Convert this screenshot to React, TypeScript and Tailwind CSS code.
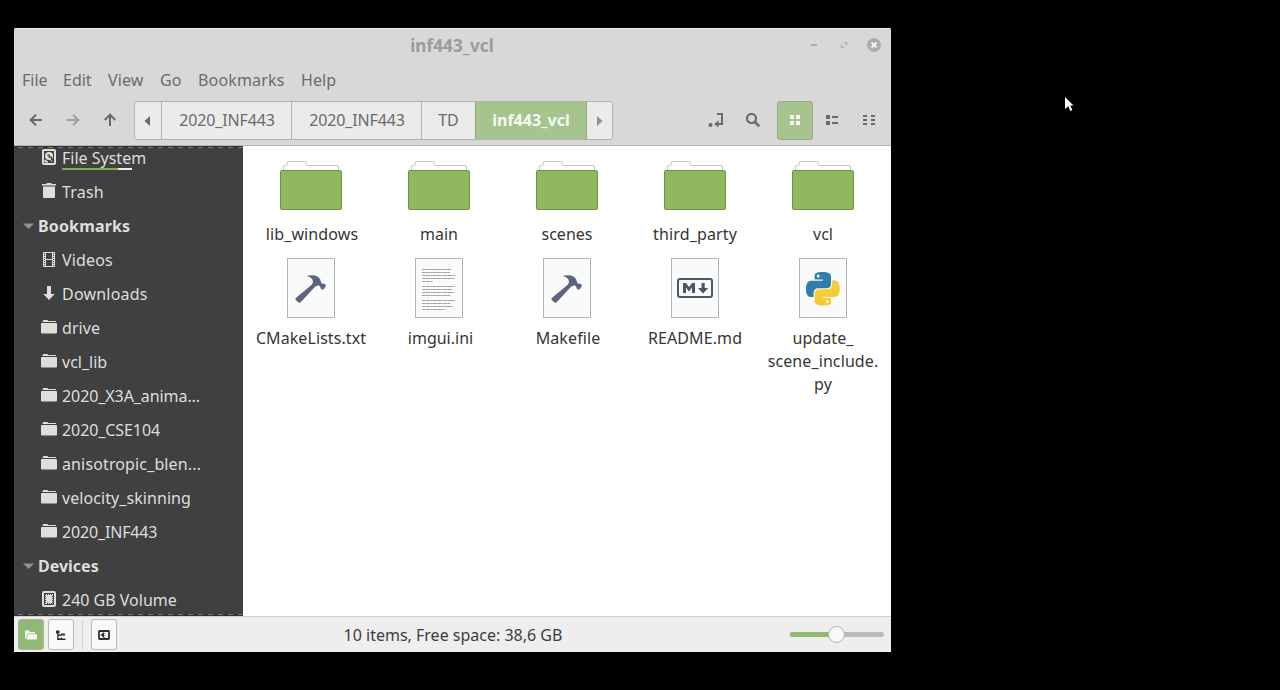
import type { ReactNode } from "react";

const dark = "#6a6a6a";

function DiskIcon() {
  return (
    <svg width="16" height="16" viewBox="0 0 16 16">
      <rect x="2" y="1" width="12" height="14" rx="1" fill="none" stroke="#dedede" strokeWidth="2" />
      <circle cx="8" cy="7" r="4" fill="#dedede" />
      <path d="M6.200 6.200h2v2h2l1 4" fill="none" stroke="#404040" strokeWidth="1.300" />
      <path d="M4 11l3 2H4zM8.500 10l2.600 2.600" stroke="#dedede" strokeWidth="1" fill="#dedede" />
    </svg>
  );
}

function TrashIcon() {
  return (
    <svg width="16" height="16" viewBox="0 0 16 16" fill="#dedede">
      <path d="M1 1h4.500V0h5v1H15v1.500H1zM2 3.500h12v10.700q0 .8-.8.800H2.800q-.8 0-.8-.8z" />
    </svg>
  );
}

function FilmIcon() {
  return (
    <svg width="16" height="16" viewBox="0 0 16 16">
      <path fill="#dedede" fillRule="evenodd" d="M2 1h12v15H2zM5 2v6h6V2zM5 9v6h6V9z" />
      <path d="M3.500 2v13M12.500 2v13" stroke="#404040" strokeWidth="1" strokeDasharray="1 1" />
    </svg>
  );
}

function DownIcon() {
  return (
    <svg width="16" height="16" viewBox="0 0 16 16" fill="#dedede">
      <path d="M6 1h4v8h3.800L8 15 2.200 9H6z" />
    </svg>
  );
}

function SmallFolder() {
  return (
    <svg width="16" height="17" viewBox="0 -1 16 17" fill="#dedede">
      <path d="M2.500 0h3.700q.8 0 .8 1h8v1H1.500V1h.5V.500zM0 4q0-1 1-1h14q1 0 1 1v8.500q0 1-1 1H1q-1 0-1-1z" />
    </svg>
  );
}

function DriveIcon() {
  return (
    <svg width="16" height="16" viewBox="0 0 16 16">
      <rect x="2" y="1" width="12" height="14" rx="1" fill="none" stroke="#dedede" strokeWidth="2" />
      <rect x="5" y="4" width="6" height="8" fill="#dedede" />
      <path d="M5 3.500h7M5 12.500h7M4.500 4v9M11.500 4v9" stroke="#dedede" strokeDasharray="1 1" />
    </svg>
  );
}

function SideRow({ icon, label, fit = "" }: { icon: ReactNode; label: string; fit?: string }) {
  return (
    <div className="flex h-[34px] shrink-0 items-center pl-[27px]">
      <span className="mt-[-2px] mr-[5px] shrink-0">{icon}</span>
      <span className={`whitespace-nowrap ${fit}`}>{label}</span>
    </div>
  );
}

function SideHead({ label, fit = "" }: { label: string; fit?: string }) {
  return (
    <div className="flex h-[34px] shrink-0 items-center pl-[9px] font-bold">
      <svg className="mr-[4px]" width="11" height="6" viewBox="0 0 11 6">
        <path d="M0 .5h11L5.500 6z" fill="#929292" />
      </svg>
      <span className={fit}>{label}</span>
    </div>
  );
}

function BigFolder() {
  return (
    <svg className="relative top-px shrink-0" width="64" height="64" viewBox="0 0 64 64">
      <path d="M4.500 18v-8q0-1.500 1.500-1.500h1.500q.8 0 .8-.8V6q0-1.500 1.500-1.500h16.200q1.500 0 1.500 1.500v1.200q0 1.300 1.300 1.300h29.200q1.500 0 1.500 1.500v8" fill="#fff" stroke="#c4c4c4" />
      <rect x="1.500" y="13.500" width="61" height="39" rx="1.500" fill="#8fb85f" stroke="#6c9748" />
    </svg>
  );
}

function Sheet({ children }: { children: ReactNode }) {
  return (
    <svg className="mt-[-4px] mb-[4px] shrink-0" width="64" height="64" viewBox="0 0 64 64">
      <rect x="8.500" y="2.500" width="47" height="59" fill="#f9fafa" stroke="#b5b5b5" />
      {children}
    </svg>
  );
}

function Hammer() {
  return (
    <Sheet>
      <path
        fill="#5a657c"
        transform="translate(-.7 -.7)"
        d="M28.300 20.700C31.500 19.600 36.500 19.800 39.500 21.500Q42.500 23.300 43 27.500L43.700 28.800Q45 27.600 47 29L47.500 31 44.800 34.500Q42 34 41.800 31.500L40.500 30 37 31.200 21.800 47.500Q20.500 48 18.500 45.800 16.700 44 17.200 43L33.700 29.200Q35.500 26.500 34 24Q32.500 21.600 28.300 20.700z"
      />
    </Sheet>
  );
}

const textLines = [
  [13.5, 29], [16.5, 28], [19.5, 33.5], [22.5, 32.5], [25.5, 11],
  [30.5, 33], [33.5, 30], [36.5, 32.5], [39.5, 28],
  [44.5, 33.5], [47.5, 28], [50.5, 31], [53.5, 23],
];

function TextDoc() {
  return (
    <Sheet>
      {textLines.map(([y, w]) => (
        <path key={y} d={`M15 ${y}h${w}`} stroke="#a3a3a3" strokeWidth="1" strokeDasharray="3 0.3 5 0.4 2 0.3" />
      ))}
    </Sheet>
  );
}

function Markdown() {
  return (
    <Sheet>
      <rect x="15" y="23" width="34" height="18" rx="2" fill="none" stroke="#4d5665" strokeWidth="2" />
      <path d="M20 37V27h3l3 4 3-4h3v10h-3v-5.500l-3 4-3-4V37zM38.500 27h3.200v5h3.500L40.100 37.500 35 32h3.500z" fill="#4d5665" />
    </Sheet>
  );
}

function Python() {
  return (
    <Sheet>
      <g transform="translate(15 16) scale(1.4)">
        <path
          fill="#2f7dab"
          d="M14.25.18l.9.2.73.26.59.3.45.32.34.34.25.34.16.33.1.3.04.26.02.2-.01.13V8.5l-.05.63-.13.55-.21.46-.26.38-.3.31-.33.25-.35.19-.35.14-.33.1-.3.07-.26.04-.21.02H8.77l-.69.05-.59.14-.5.22-.41.27-.33.32-.27.35-.2.36-.15.37-.1.35-.07.32-.04.27-.02.21v3.06H3.17l-.21-.03-.28-.07-.32-.12-.35-.18-.36-.26-.36-.36-.35-.46-.32-.59-.28-.73-.21-.88-.14-1.05-.05-1.23.06-1.22.16-1.04.24-.87.32-.71.36-.57.4-.44.42-.33.42-.24.4-.16.36-.1.32-.05.24-.01h.16l.06.01h8.16v-.83H6.18l-.01-2.75-.02-.37.05-.34.11-.31.17-.28.25-.26.31-.23.38-.2.44-.18.51-.15.58-.12.64-.1.71-.06.77-.04.84-.02 1.27.05zm-6.3 1.98l-.23.33-.08.41.08.41.23.34.33.22.41.09.41-.09.33-.22.23-.34.08-.41-.08-.41-.23-.33-.33-.22-.41-.09-.41.09z"
        />
        <path
          fill="#f5cc33"
          d="M21.04 6.11l.28.06.32.12.35.18.36.27.36.35.35.47.32.59.28.73.21.88.14 1.04.05 1.23-.06 1.23-.16 1.04-.24.86-.32.71-.36.57-.4.45-.42.33-.42.24-.4.16-.36.09-.32.05-.24.02-.16-.01h-8.22v.82h5.84l.01 2.76.02.36-.05.34-.11.31-.17.29-.25.25-.31.24-.38.2-.44.17-.51.15-.58.13-.64.09-.71.07-.77.04-.84.01-1.27-.04-1.07-.14-.9-.2-.73-.25-.59-.3-.45-.33-.34-.34-.25-.34-.16-.33-.1-.3-.04-.25-.02-.2.01-.13v-5.34l.05-.64.13-.54.21-.46.26-.38.3-.32.33-.24.35-.2.35-.14.33-.1.3-.06.26-.04.21-.02.13-.01h5.84l.69-.05.59-.14.5-.21.41-.28.33-.32.27-.35.2-.36.15-.36.1-.35.07-.32.04-.28.02-.21V6.07h2.09l.14.01zm-6.47 14.25l-.23.33-.08.41.08.41.23.33.33.23.41.08.41-.08.33-.23.23-.33.08-.41-.08-.41-.23-.33-.33-.23-.41-.08-.41.08z"
        />
      </g>
    </Sheet>
  );
}

function FileItem({ icon, lines, fit = "" }: { icon: ReactNode; lines: string[]; fit?: string }) {
  return (
    <div className="flex h-[104px] flex-col items-center">
      {icon}
      <div className={`mt-[3px] text-center leading-[23px] whitespace-nowrap ${fit}`}>
        {lines.map((l) => (
          <div key={l}>{l}</div>
        ))}
      </div>
    </div>
  );
}

function TitleBar() {
  return (
    <div className="flex h-[35px] shrink-0 items-center border-t border-[#ebebeb]">
      <div className="w-[100px]" />
      <div className="flex-1 text-center text-[17px] leading-[34px] font-bold tracking-[0.13px] text-[#9b9b9b]">inf443_vcl</div>
      <svg width="101" height="34" viewBox="0 0 101 34">
        <path d="M21 16h6" stroke="#aaa" strokeWidth="2" />
        <path d="M53.500 13H57v3.500zM51 15.500V19h3.500z" fill="#b2b2b2" stroke="#b2b2b2" strokeWidth="0.500" />
        <circle cx="84" cy="16" r="7" fill="#adadad" />
        <path d="M81.500 13.500l5 5M86.500 13.500l-5 5" stroke="#f5f5f5" strokeWidth="2" />
      </svg>
    </div>
  );
}

function NavArrow({ d, color, box }: { d: string; color: string; box: string }) {
  return (
    <div className={box}>
      <svg width="14" height="14" viewBox="0 0 14 14" fill="none" stroke={color} strokeWidth="2">
        <path d={d} />
      </svg>
    </div>
  );
}

function ToolBar() {
  return (
    <div className="flex h-[48px] shrink-0 border-b border-[#b4b4b4] pt-[3px]">
      <NavArrow box="flex h-[38px] w-[37px] items-center justify-end pr-[8px]" color={dark} d="M13 7H2M7 1.700L1.700 7 7 12.300" />
      <NavArrow box="flex h-[38px] w-[37px] items-center justify-end pr-[8px]" color="#9e9e9e" d="M1 7h11M7 1.700L12.300 7 7 12.300" />
      <NavArrow box="flex h-[38px] w-[46px] items-center pl-[15px]" color={dark} d="M7 13V2M1.700 7L7 1.700 12.300 7" />
      <div className="flex h-[39px] overflow-hidden rounded-[3px] border border-[#b2b2b2] bg-[#ebebeb] leading-[23px] text-[#6a6a6a]">
        <div className="flex w-[27px] items-center justify-center border-r border-[#b2b2b2] pr-[2px]">
          <svg width="6" height="10" viewBox="0 0 6 10"><path d="M6 0v10L.5 5z" fill={dark} /></svg>
        </div>
        <div className="flex w-[130px] items-center justify-center border-r border-[#b2b2b2] pl-px tracking-[-0.16px]">2020_INF443</div>
        <div className="flex w-[130px] items-center justify-center border-r border-[#b2b2b2] pl-px tracking-[-0.16px]">2020_INF443</div>
        <div className="flex w-[53px] items-center justify-center">TD</div>
        <div className="-my-px flex w-[112px] items-center justify-center border border-[#91a67f] bg-[#a5c48e] font-bold text-[#f7f9f5]">inf443_vcl</div>
        <div className="flex w-[25px] items-center justify-center">
          <svg width="6" height="10" viewBox="0 0 6 10"><path d="M0 0v10l5.500-5z" fill="#909090" /></svg>
        </div>
      </div>
      <div className="flex-1" />
      <svg className="mt-[11px]" width="16" height="16" viewBox="0 0 16 16">
        <circle cx="2.500" cy="13" r="2" fill={dark} />
        <path d="M9 2h5v10H9.500" fill="none" stroke={dark} strokeWidth="2" />
        <path d="M10.500 8.500v7L6 12z" fill={dark} />
      </svg>
      <svg className="mt-[12px] ml-[21px]" width="16" height="16" viewBox="0 0 16 16" fill="none" stroke={dark} strokeWidth="2.200">
        <circle cx="6.500" cy="5.500" r="4.500" />
        <path d="M9.800 8.800l4.500 4.500" strokeWidth="2.600" />
      </svg>
      <div className="ml-[16px] flex h-[39px] w-[36px] items-center justify-center rounded-[3px] border border-[#98aa89] bg-[#a5c48e]">
        <svg className="mt-[-1px]" width="10" height="10" viewBox="0 0 10 10" fill="#f7f9f4"><path d="M0 0h4v4H0zM6 0h4v4H6zM0 6h4v4H0zM6 6h4v4H6z" /></svg>
      </div>
      <svg className="mt-[14px] ml-[13px]" width="12" height="11" viewBox="0 0 12 11" fill={dark}>
        <path d="M0 0h4v4H0zM6 1h6v2H6zM0 6h4v4H0zM6 7h6v2H6z" />
      </svg>
      <svg className="mt-[14px] mr-[16px] ml-[25px]" width="12" height="11" viewBox="0 0 12 11" fill={dark}>
        <path d="M0 0h4v2H0zM0 4h4v2H0zM0 8h4v2H0zM8 0h4v2H8zM8 4h4v2H8zM8 8h4v2H8z" />
      </svg>
    </div>
  );
}

const bookmarks = [
  { label: "drive", fit: "tracking-[0.05px]" },
  { label: "vcl_lib", fit: "" },
  { label: "2020_X3A_anima...", fit: "tracking-[-0.08px]" },
  { label: "2020_CSE104", fit: "tracking-[-0.08px]" },
  { label: "anisotropic_blen...", fit: "tracking-[0.13px]" },
  { label: "velocity_skinning", fit: "tracking-[0.07px]" },
  { label: "2020_INF443", fit: "tracking-[-0.16px]" },
];

function Sidebar() {
  return (
    <div className="relative flex w-[229px] shrink-0 flex-col overflow-hidden bg-[#404040] text-[#dedede]">
      <div className="mt-[-5px] flex flex-col">
        <div className="relative">
          <SideRow icon={<DiskIcon />} label="File System" />
          <div className="absolute top-[27px] left-[48px] flex h-[2px] w-[70px] bg-[#eee]">
            <div className="w-[56px] bg-[#80ab57]" />
          </div>
        </div>
        <SideRow icon={<TrashIcon />} label="Trash" fit="tracking-[0.2px]" />
        <SideHead label="Bookmarks" fit="tracking-[0.16px]" />
        <SideRow icon={<FilmIcon />} label="Videos" fit="tracking-[0.15px]" />
        <SideRow icon={<DownIcon />} label="Downloads" fit="tracking-[0.2px]" />
        {bookmarks.map((b) => (
          <SideRow key={b.label} icon={<SmallFolder />} label={b.label} fit={b.fit} />
        ))}
        <SideHead label="Devices" />
        <SideRow icon={<DriveIcon />} label="240 GB Volume" />
      </div>
      <svg className="absolute inset-0" width="229" height="470" viewBox="0 0 229 470" fill="none">
        <path d="M0 1h229M0 469h229" stroke="#333" strokeWidth="2" />
        <path d="M4 1.500h225M4 468.500h225" stroke="#777" strokeWidth="1" strokeDasharray="5 5" />
      </svg>
    </div>
  );
}

function StatusBar() {
  return (
    <div className="flex h-[36px] shrink-0 items-center border-t border-[#cfcfcf] bg-[#eeeeee] pl-[4px] text-[#3d3d3d]">
      <div className="flex h-[31px] w-[26px] items-center justify-center rounded-[3px] border border-[#aab5a0] bg-[#92b974]">
        <svg width="12" height="10" viewBox="0 0 12 10" fill="#f8f9f6"><path d="M0 .5h4l1 1.500h5V3.500H2.500L1 8.500H0zM3 4.200h9V9.500H1.500z" /></svg>
      </div>
      <div className="ml-[4px] flex h-[31px] w-[26px] items-center justify-center rounded-[3px] border border-[#b8b8b8] bg-[#f8f9f9]">
        <svg width="10" height="10" viewBox="0 0 10 10" fill="#303030"><path d="M0 .5h3.500v3H2.500V4.500H5V3.500h4v2H5v.5H2.500V8.200H5V7.500h1v1h3.500V10H1.200V3.500H0z" /></svg>
      </div>
      <div className="ml-[8px] h-[30px] w-px bg-[#d5d5d5]" />
      <div className="ml-[8px] flex h-[31px] w-[26px] items-center justify-center rounded-[3px] border border-[#b8b8b8] bg-[#f8f9f9]">
        <svg width="12" height="10" viewBox="0 0 12 10"><rect x="1" y="1" width="10" height="8" rx="0.500" fill="none" stroke="#303030" strokeWidth="1.800" /><path d="M6 2v6L2.500 5z" fill="#303030" /><path d="M6.800 1v8" stroke="#303030" strokeWidth="0.800" strokeDasharray="1 1" /></svg>
      </div>
      <div className="flex-1 text-center">10 items, Free space: 38,6 GB</div>
      <svg className="mt-[-1px] mr-[6px]" width="96" height="20" viewBox="0 0 96 20">
        <rect x="1" y="8" width="94" height="5" rx="2.500" fill="#bababa" />
        <rect x="1" y="8" width="45" height="5" rx="2.500" fill="#92b974" />
        <circle cx="47.500" cy="10.500" r="8" fill="#f7f8f8" stroke="#b1b1b1" />
      </svg>
    </div>
  );
}

export default function App() {
  return (
    <div className="relative h-[690px] w-[1280px] overflow-hidden bg-black pt-[28px] pl-[14px] font-['Noto_Sans',sans-serif] text-[16px] leading-[22px]">
      <div className="flex h-[624px] w-[877px] flex-col overflow-hidden rounded-t-[2px] bg-[#d8d8d8]">
        <TitleBar />
        <div className="flex h-[35px] shrink-0 items-center pb-[2px] pl-[8px] text-[#6b6b6b]">
          <span className="w-[41px]">File</span>
          <span className="w-[45px]">Edit</span>
          <span className="w-[52px] tracking-[0.1px]">View</span>
          <span className="w-[38px]">Go</span>
          <span className="w-[103px] tracking-[0.16px]">Bookmarks</span>
          <span className="tracking-[0.1px]">Help</span>
        </div>
        <ToolBar />
        <div className="flex min-h-0 flex-1">
          <Sidebar />
          <div className="grid flex-1 auto-rows-[104px] grid-cols-[repeat(5,128px)] content-start bg-white pt-[10px] pl-[4px] text-[#353535]">
            <FileItem icon={<BigFolder />} lines={["lib_windows"]} fit="pl-[2px] tracking-[0.1px]" />
            <FileItem icon={<BigFolder />} lines={["main"]} />
            <FileItem icon={<BigFolder />} lines={["scenes"]} />
            <FileItem icon={<BigFolder />} lines={["third_party"]} fit="tracking-[0.15px]" />
            <FileItem icon={<BigFolder />} lines={["vcl"]} />
            <FileItem icon={<Hammer />} lines={["CMakeLists.txt"]} fit="tracking-[0.08px]" />
            <FileItem icon={<TextDoc />} lines={["imgui.ini"]} fit="pl-[3px]" />
            <FileItem icon={<Hammer />} lines={["Makefile"]} fit="pl-[2px] tracking-[0.1px]" />
            <FileItem icon={<Markdown />} lines={["README.md"]} fit="tracking-[0.1px]" />
            <FileItem icon={<Python />} lines={["update_", "scene_include.", "py"]} fit="tracking-[0.1px]" />
          </div>
        </div>
        <StatusBar />
      </div>
      <svg className="absolute top-[96px] left-[1064px]" width="11" height="18" viewBox="0 0 11 18">
        <path d="M1 1l8.500 8.500H6.300l2 4.500-2 .9-2-4.600L1 13z" fill="#fff" />
      </svg>
    </div>
  );
}
